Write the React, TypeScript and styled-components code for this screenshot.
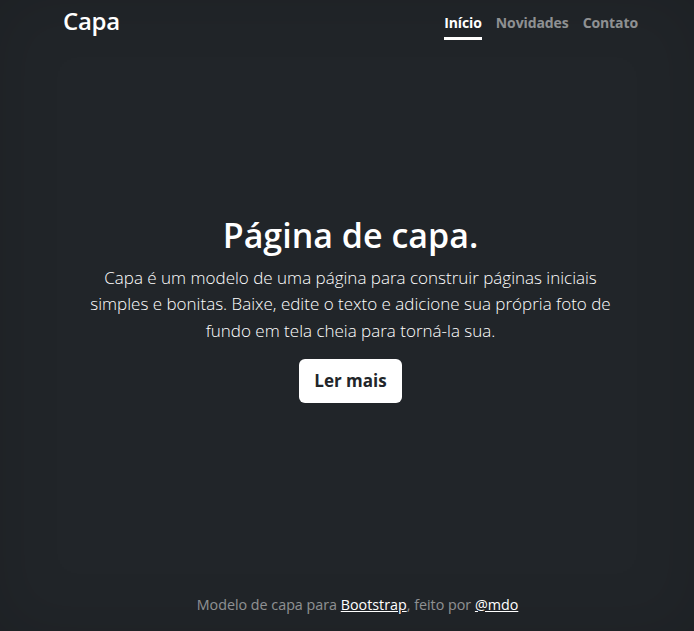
import React from "react";
import styled, { createGlobalStyle } from "styled-components";

const Global = createGlobalStyle`
  html, body, #root { height: 100%; }
  body {
    margin: 0;
    background: #212529;
    color: #fff;
    font-family: "Open Sans", "Noto Sans", sans-serif;
    box-shadow: inset 0 0 4rem rgba(0,0,0,.12);
  }
  * { box-sizing: border-box; }
`;

const Page = styled.div`
  display: flex;
  flex-direction: column;
  min-height: 100%;
  padding: 0 56px 0 63px;
`;

const Header = styled.header`
  display: flex;
  justify-content: space-between;
  align-items: flex-start;
  padding-top: 7px;
`;

const Brand = styled.h3`
  margin: 0;
  font-size: 24px;
  font-weight: 600;
  line-height: 1.2;
  letter-spacing: -0.3px;
`;

const Nav = styled.nav`
  display: flex;
  gap: 14px;
  padding-top: 5px;
`;

const NavLink = styled.a<{ $active?: boolean }>`
  font-size: 14px;
  font-weight: 700;
  line-height: 1.5;
  letter-spacing: -0.1px;
  padding: 0 0 4px;
  color: ${(p) => (p.$active ? "#fff" : "rgba(255,255,255,.5)")};
  border-bottom: 3px solid ${(p) => (p.$active ? "#fff" : "transparent")};
  text-decoration: none;
  cursor: pointer;
`;

const Main = styled.main`
  margin: auto 0;
  padding-bottom: 16px;
  text-align: center;
  display: flex;
  flex-direction: column;
  align-items: center;
`;

const Title = styled.h1`
  margin: 0 0 9px;
  font-size: 34px;
  font-weight: 600;
  line-height: 1.2;
`;

const Lead = styled.p`
  margin: 0 0 15px;
  max-width: 530px;
  font-size: 17px;
  font-weight: 300;
  line-height: 26.4px;
`;

const Button = styled.a`
  display: inline-block;
  background: #fff;
  color: #212529;
  font-size: 17px;
  font-weight: 700;
  line-height: 1.5;
  padding: 9px 15px;
  border-radius: 6px;
  text-decoration: none;
  cursor: pointer;
`;

const Footer = styled.footer`
  text-align: center;
  font-size: 14.3px;
  line-height: 1.5;
  color: rgba(255,255,255,.5);
  padding: 0 0 16px 14px;
`;

const FootLink = styled.a`
  color: #fff;
  text-decoration: underline;
`;

export default function App() {
  return (
    <>
      <Global />
      <Page>
        <Header>
          <Brand>Capa</Brand>
          <Nav>
            <NavLink $active>Início</NavLink>
            <NavLink>Novidades</NavLink>
            <NavLink>Contato</NavLink>
          </Nav>
        </Header>
        <Main>
          <Title>Página de capa.</Title>
          <Lead>
            Capa é um modelo de uma página para construir páginas iniciais
            simples e bonitas. Baixe, edite o texto e adicione sua própria foto
            de fundo em tela cheia para torná-la sua.
          </Lead>
          <Button>Ler mais</Button>
        </Main>
        <Footer>
          Modelo de capa para <FootLink>Bootstrap</FootLink>, feito por{" "}
          <FootLink>@mdo</FootLink>
        </Footer>
      </Page>
    </>
  );
}
